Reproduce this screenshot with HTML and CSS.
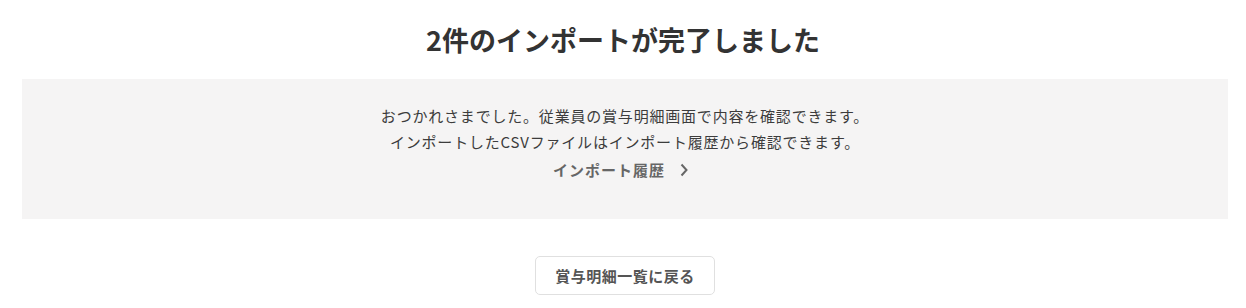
FILE: index.html
```html
<!DOCTYPE html>
<html lang="ja">
<head>
<meta charset="utf-8">
<link rel="stylesheet" href="styles.css">
</head>
<body>
<main class="page">
  <h1 class="title">2件のインポートが完了しました</h1>
  <section class="notice">
    <p class="notice-text">おつかれさまでした。従業員の賞与明細画面で内容を確認できます。<br>インポートしたCSVファイルはインポート履歴から確認できます。</p>
    <a class="history-link" href="#">インポート履歴<svg class="chevron" width="10" height="14" viewBox="0 0 10 14"><path d="M2.5 1.5 L7.5 7 L2.5 12.5" fill="none" stroke="currentColor" stroke-width="2"/></svg></a>
  </section>
  <div class="actions">
    <button class="back-button" type="button">賞与明細一覧に戻る</button>
  </div>
</main>
</body>
</html>
```

FILE: styles.css
```css
html, body {
  margin: 0;
  padding: 0;
  background: #ffffff;
}
body {
  font-family: "Noto Sans CJK JP", "Noto Sans", sans-serif;
  color: #333333;
}
.page {
  display: flex;
  flex-direction: column;
}
.title {
  margin: 0;
  padding: 20px 0 19px;
  font-size: 27px;
  line-height: 40px;
  font-weight: 700;
  text-align: center;
  color: #333333;
  letter-spacing: 0;
}
.notice {
  margin: 0 18px 0 22px;
  background: #f5f4f4;
  height: 140px;
  box-sizing: border-box;
  padding-top: 24px;
  display: flex;
  flex-direction: column;
  align-items: center;
}
.notice-text {
  margin: 0;
  font-size: 15px;
  line-height: 26px;
  letter-spacing: 0.8px;
  text-align: center;
  color: #3c3c3c;
}
.history-link {
  margin-top: 2px;
  padding-right: 8px;
  display: flex;
  align-items: center;
  gap: 14px;
  font-size: 15px;
  line-height: 26px;
  font-weight: 700;
  color: #666666;
  text-decoration: none;
  letter-spacing: 1px;
}
.chevron {
  display: block;
}
.actions {
  display: flex;
  justify-content: center;
  padding-top: 37px;
  padding-left: 4px;
}
.back-button {
  width: 180px;
  height: 39px;
  background: #ffffff;
  border: 1px solid #e0e0e0;
  border-radius: 5px;
  font-family: inherit;
  font-size: 15px;
  font-weight: 700;
  color: #555555;
  letter-spacing: 0.5px;
  cursor: pointer;
}
```
